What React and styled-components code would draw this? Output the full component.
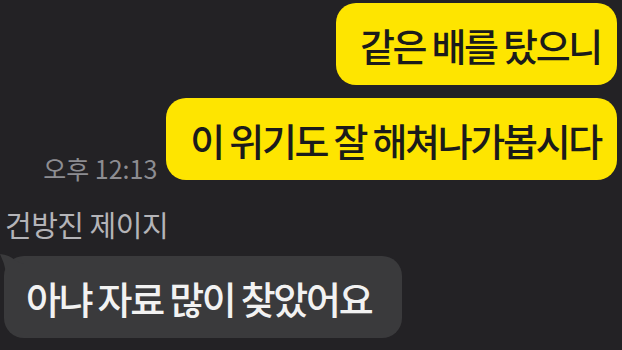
import React from "react";
import styled, { createGlobalStyle } from "styled-components";

const Global = createGlobalStyle`
  html, body { margin: 0; padding: 0; background: #232225; }
  body { width: 622px; height: 350px; overflow: hidden; }
  * { box-sizing: border-box; }
`;

const Screen = styled.div`
  width: 622px;
  height: 350px;
  background: #232225;
  font-family: "Noto Sans CJK KR", "Noto Sans", sans-serif;
  display: flex;
  flex-direction: column;
  padding: 3px 5px 0 4px;
`;

const Row = styled.div`
  display: flex;
  justify-content: ${(p) => (p.$mine ? "flex-end" : "flex-start")};
  align-items: flex-end;
  gap: 9px;
  margin-top: ${(p) => p.$top || 0}px;
`;

const Bubble = styled.div`
  position: relative;
  height: 82px;
  display: flex;
  align-items: center;
  padding: ${(p) => (p.$mine ? "0 16px 0 24px" : "0 31px 0 22px")};
  border-radius: 20px;
  background: ${(p) => (p.$mine ? "#FEE500" : "#3A3A3C")};
  color: ${(p) => (p.$mine ? "#1B1B1B" : "#F2F2F2")};
  font-size: 38px;
  font-weight: 500;
  letter-spacing: -2.3px;
  white-space: nowrap;
`;

const Time = styled.span`
  font-size: 25px;
  color: #8D8D92;
  margin-bottom: -6px;
  white-space: nowrap;
`;

const Name = styled.div`
  font-size: 29px;
  color: #B4B4B8;
  margin-top: 27px;
  padding-left: 1px;
  line-height: 34px;
  letter-spacing: -0.5px;
`;

const Tail = styled.svg`
  position: absolute;
  left: -4px;
  top: -4px;
`;

export default function App() {
  return (
    <>
      <Global />
      <Screen>
        <Row $mine>
          <Bubble $mine>같은 배를 탔으니</Bubble>
        </Row>
        <Row $mine $top={13}>
          <Time>오후 12:13</Time>
          <Bubble $mine>이 위기도 잘 해쳐나가봅시다</Bubble>
        </Row>
        <Name>건방진 제이지</Name>
        <Row $top={15}>
          <Bubble>
            <Tail width="24" height="20" viewBox="0 0 24 20">
              <path d="M0 2 Q10 3 16 9 L24 12 L24 20 L6 20 Q4 10 0 2 Z" fill="#3A3A3C" />
            </Tail>
            아냐 자료 많이 찾았어요
          </Bubble>
        </Row>
      </Screen>
    </>
  );
}
